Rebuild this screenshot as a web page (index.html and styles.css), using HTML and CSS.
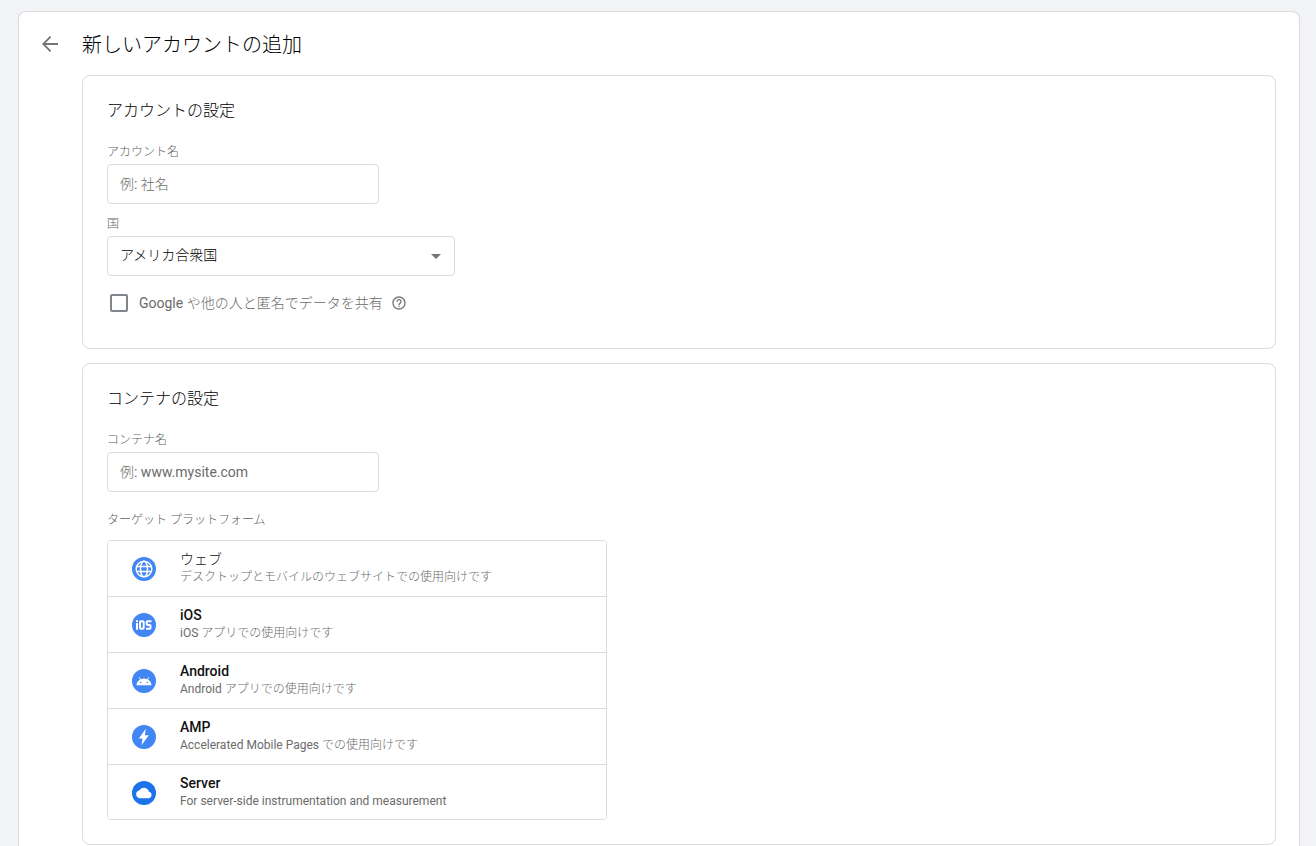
FILE: index.html
```html
<!DOCTYPE html>
<html lang="ja">
<head>
<meta charset="utf-8">
<meta name="viewport" content="width=device-width, initial-scale=1">
<title>新しいアカウントの追加</title>
<link rel="stylesheet" href="styles.css">
</head>
<body>
<main class="sheet">
  <header class="sheet-header">
    <button class="icon-button back" type="button" aria-label="戻る">
      <svg width="24" height="24" viewBox="0 0 24 24"><path fill="#757575" d="M20 11.1H7.6l5.7-5.8L12 4l-8 8 8 8 1.3-1.3-5.7-5.8H20z"/></svg>
    </button>
    <h1 class="title">新しいアカウントの追加</h1>
  </header>
  <form class="cards">
    <section class="card">
      <h2 class="card-title">アカウントの設定</h2>
      <div class="field">
        <label class="label" for="account">アカウント名</label>
        <input class="text-input" id="account" type="text" placeholder="例: 社名">
      </div>
      <div class="field">
        <label class="label" for="country">国</label>
        <div class="select-wrap">
          <select class="select" id="country"><option>アメリカ合衆国</option></select>
          <svg class="select-arrow" width="10" height="5" viewBox="0 0 10 5"><path fill="#757575" d="M0 0h10L5 5z"/></svg>
        </div>
      </div>
      <div class="share">
        <input class="checkbox" id="share" type="checkbox">
        <label class="share-label" for="share">Google や他の人と匿名でデータを共有</label>
        <button class="icon-button help" type="button" aria-label="ヘルプ">
          <svg width="16" height="16" viewBox="0 0 24 24"><path fill="#757575" d="M11 18h2v-2h-2v2zm1-16C6.480 2 2 6.480 2 12s4.480 10 10 10 10-4.480 10-10S17.520 2 12 2zm0 18c-4.410 0-8-3.590-8-8s3.590-8 8-8 8 3.590 8 8-3.590 8-8 8zm0-14c-2.210 0-4 1.790-4 4h2c0-1.100.9-2 2-2s2 .9 2 2c0 2-3 1.750-3 5h2c0-2.250 3-2.500 3-5 0-2.210-1.790-4-4-4z"/></svg>
        </button>
      </div>
    </section>
    <section class="card">
      <h2 class="card-title">コンテナの設定</h2>
      <div class="field">
        <label class="label" for="container">コンテナ名</label>
        <input class="text-input" id="container" type="text" placeholder="例: www.mysite.com">
      </div>
      <h3 class="label platform-label">ターゲット プラットフォーム</h3>
      <div class="platforms">
        <button class="platform" type="button">
          <svg class="platform-icon" viewBox="0 0 24 24"><circle cx="12" cy="12" r="12" fill="#4285f4"/><g fill="none" stroke="#fff" stroke-width="1.5"><circle cx="12" cy="12" r="7.800"/><ellipse cx="12" cy="12" rx="3.500" ry="7.800"/><path d="M5 9.500h14M5 14.500h14"/></g></svg>
          <span class="platform-text"><span class="platform-name">ウェブ</span><span class="platform-desc">デスクトップとモバイルのウェブサイトでの使用向けです</span></span>
        </button>
        <button class="platform" type="button">
          <svg class="platform-icon" viewBox="0 0 24 24"><circle cx="12" cy="12" r="12" fill="#4285f4"/><g fill="none" stroke="#fff" stroke-width="2"><path d="M5 10v6.800M5 7.300v1.700"/><rect x="8" y="8.300" width="3.700" height="7.500" rx="1"/><path d="M19.500 8.300h-4q-.8 0-.8.800v2q0 .8.800.8h2.200q.8 0 .8.800v2.300q0 .8-.8.800h-3.700"/></g></svg>
          <span class="platform-text"><span class="platform-name">iOS</span><span class="platform-desc">iOS アプリでの使用向けです</span></span>
        </button>
        <button class="platform" type="button">
          <svg class="platform-icon" viewBox="0 0 24 24"><circle cx="12" cy="12" r="12" fill="#4285f4"/><path fill="#fff" d="M4.500 16.300c.2-2.600 1.600-4.600 3.600-5.700L6.700 8.300l.7-.4 1.500 2.300c2-.8 4.200-.8 6.200 0l1.500-2.300.7.4-1.400 2.300c2 1.100 3.400 3.100 3.600 5.700z"/><circle cx="8.700" cy="13.500" r=".8" fill="#4285f4"/><circle cx="15.300" cy="13.500" r=".8" fill="#4285f4"/></svg>
          <span class="platform-text"><span class="platform-name">Android</span><span class="platform-desc">Android アプリでの使用向けです</span></span>
        </button>
        <button class="platform" type="button">
          <svg class="platform-icon" viewBox="0 0 24 24"><circle cx="12" cy="12" r="12" fill="#4285f4"/><path fill="#fff" d="M13.800 3.800 6.800 13.400h3.700l-1 6.800 7.300-9.900h-3.900z"/></svg>
          <span class="platform-text"><span class="platform-name">AMP</span><span class="platform-desc">Accelerated Mobile Pages での使用向けです</span></span>
        </button>
        <button class="platform" type="button">
          <svg class="platform-icon" viewBox="0 0 24 24"><circle cx="12" cy="12" r="12" fill="#1a73e8"/><path fill="#fff" d="M16.900 10.700A5.300 5.300 0 0 0 7.200 9.400 4 4 0 0 0 7.300 17.200h9.400a3.300 3.300 0 0 0 .2-6.500z"/></svg>
          <span class="platform-text"><span class="platform-name">Server</span><span class="platform-desc">For server-side instrumentation and measurement</span></span>
        </button>
      </div>
    </section>
  </form>
</main>
</body>
</html>
```
FILE: styles.css
```css
* { box-sizing: border-box; }
body {
  margin: 0;
  padding: 11px 16px 0 18px;
  background: #f1f3f4;
  color: #000;
  font-family: Roboto, "Noto Sans CJK JP Light", "Noto Sans CJK JP", sans-serif;
  font-size: 14px;
}
button, input, select { font: inherit; color: inherit; }
h1, h2, h3 { margin: 0; font-weight: 400; }
.sheet {
  min-height: calc(100vh - 11px);
  padding: 0 23px 1px;
  background: #fff;
  border: 1px solid #dadce0;
  border-bottom: 0;
  border-radius: 8px 8px 0 0;
}
.sheet-header { display: flex; align-items: center; gap: 20px; height: 63px; margin-left: -4px; }
.icon-button { display: flex; padding: 0; border: 0; background: none; cursor: pointer; }
.title { font-size: 20px; line-height: 24px; padding-top: 2px; }
.cards { display: grid; gap: 14px; margin: 0 0 0 40px; }
.card { padding: 24px; border: 1px solid #dadce0; border-radius: 8px; }
.card-title { font-size: 16px; line-height: 22px; margin-bottom: 22px; }
.field { display: flex; flex-direction: column; align-items: flex-start; margin-bottom: 12px; }
.label { color: #5f5f5f; font-size: 12px; line-height: 16px; margin-bottom: 4px; }
.text-input {
  width: 272px;
  max-width: 100%;
  height: 40px;
  padding: 0 12px;
  border: 1px solid #dadce0;
  border-radius: 4px;
  background: #fff;
}
.text-input::placeholder { color: #6b6b6b; opacity: 1; }
.select-wrap { position: relative; width: 348px; max-width: 100%; }
.select {
  display: block;
  width: 100%;
  height: 40px;
  padding: 0 12px 2px;
  border: 1px solid #dadce0;
  border-radius: 4px;
  background: #fff;
  appearance: none;
}
.select-arrow { position: absolute; right: 14px; top: 18px; pointer-events: none; }
.share { display: flex; align-items: center; height: 30px; padding-left: 3px; margin-bottom: 6px; color: #6b6b6b; }
.checkbox {
  appearance: none;
  width: 18px;
  height: 18px;
  margin: 0 11px 0 0;
  border: 2px solid #80868b;
  border-radius: 2px;
}
.checkbox:checked { background: #1a73e8; border-color: #1a73e8; }
.share-label { line-height: 20px; }
.help { margin-left: 8px; }
.platform-label { margin: 20px 0 12px; }
.platforms { width: 500px; max-width: 100%; border: 1px solid #dadce0; border-radius: 4px; overflow: hidden; }
.platform {
  display: flex;
  align-items: center;
  gap: 24px;
  width: 100%;
  height: 56px;
  padding: 0 24px;
  border: 0;
  border-bottom: 1px solid #dadce0;
  background: #fff;
  text-align: left;
  cursor: pointer;
}
.platform:last-child { height: 54px; padding-top: 1px; border-bottom: 0; }
.platform-icon { width: 24px; height: 24px; flex: none; }
.platform-text { display: grid; padding-bottom: 2px; }
.platform-name { font-size: 14px; line-height: 18px; font-weight: 500; color: #111; }
.platform-desc { font-size: 12px; line-height: 18px; color: #6b6b6b; }
```
